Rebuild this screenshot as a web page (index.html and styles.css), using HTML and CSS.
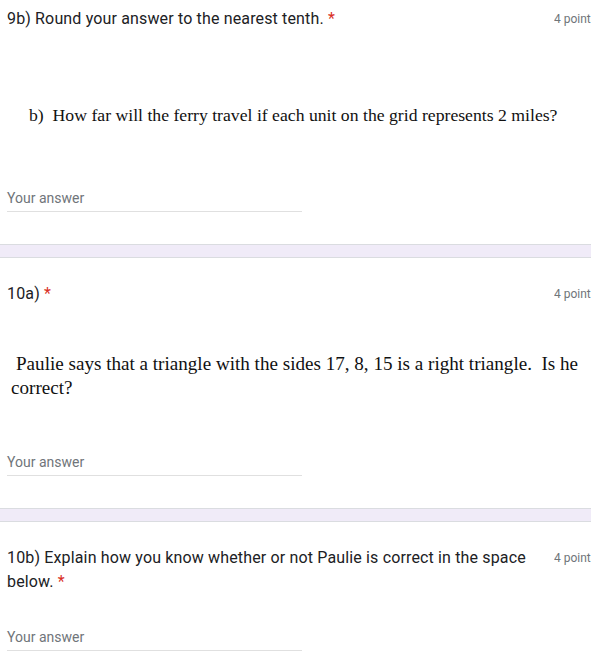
FILE: index.html
```html
<!DOCTYPE html>
<html>
<head>
<meta charset="utf-8">
<link rel="stylesheet" href="styles.css">
</head>
<body>
<div class="question q1">
  <div class="header">
    <div class="title">9b) Round your answer to the nearest tenth. <span class="req">*</span></div>
    <div class="points">4 points</div>
  </div>
  <div class="image-text img1">b)&nbsp; How far will the ferry travel if each unit on the grid represents 2 miles?</div>
  <div class="answer a1">Your answer</div>
</div>
<div class="sep"></div>
<div class="question q2">
  <div class="header">
    <div class="title">10a) <span class="req">*</span></div>
    <div class="points">4 points</div>
  </div>
  <div class="image-text img2">Paulie says that a triangle with the sides 17, 8, 15 is a right triangle.&nbsp; Is he correct?</div>
  <div class="answer a2">Your answer</div>
</div>
<div class="sep"></div>
<div class="question q3">
  <div class="header">
    <div class="title">10b) Explain how you know whether or not Paulie is correct in the space below. <span class="req">*</span></div>
    <div class="points">4 points</div>
  </div>
  <div class="answer a3">Your answer</div>
</div>
</body>
</html>
```
FILE: styles.css
```css
html, body {
  margin: 0;
  padding: 0;
  background: #fff;
  overflow: hidden;
  width: 591px;
}
body {
  font-family: Roboto, "Liberation Sans", sans-serif;
  color: #202124;
}
.question {
  padding-left: 7px;
  padding-bottom: 32px;
}
.q1 { padding-top: 7px; }
.q2, .q3 { padding-top: 24px; }
.header {
  display: flex;
  gap: 12px;
}
.title {
  flex: 1;
  font-size: 16px;
  line-height: 24px;
  letter-spacing: 0.15px;
}
.req { color: #d93025; }
.points {
  flex: none;
  width: 37px;
  overflow: hidden;
  white-space: nowrap;
  font-size: 12px;
  line-height: 24px;
  color: #70757a;
}
.image-text {
  font-family: "Liberation Serif", "Times New Roman", serif;
  line-height: 24px;
  color: #111;
}
.img1 { margin-top: 72px; padding-left: 22px; font-size: 17.7px; }
.img2 { margin-top: 46px; padding-left: 4px; text-indent: 5px; font-size: 19.1px; }
.answer {
  width: 295px;
  font-size: 14px;
  line-height: 20px;
  color: #70757a;
  padding-bottom: 3px;
  border-bottom: 1px solid #e0e0e0;
}
.a1 { margin-top: 61px; }
.a2 { margin-top: 52px; }
.a3 { margin-top: 33px; }
.sep {
  height: 12px;
  background: #f0ebf8;
  border-top: 1px solid #dadce0;
  border-bottom: 1px solid #dadce0;
}
```
